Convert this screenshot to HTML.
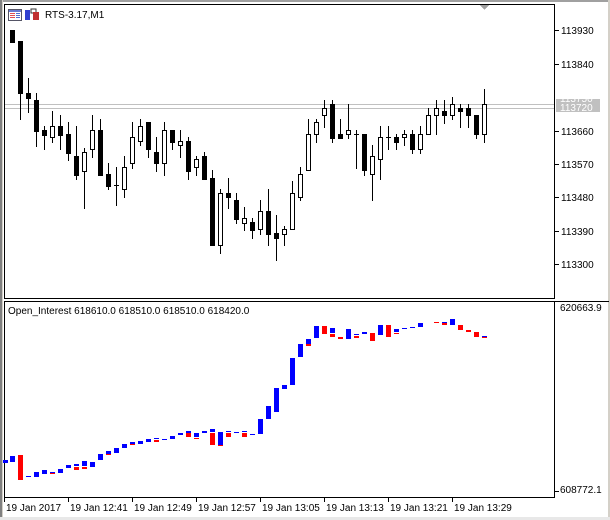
<!DOCTYPE html>
<html><head><meta charset="utf-8"><style>
html,body{margin:0;padding:0;background:#fff;}
body{width:610px;height:520px;overflow:hidden;position:relative;}
svg{position:absolute;left:0;top:0;}
text{font-family:"Liberation Sans",sans-serif;font-size:10px;fill:#000;}
</style></head><body>
<svg id="s" width="610" height="520" xmlns="http://www.w3.org/2000/svg" shape-rendering="crispEdges">
<rect x="0" y="0" width="610" height="520" fill="#fff"/>
<rect x="0" y="0" width="610" height="2" fill="#a0a0a0"/>
<rect x="0" y="0" width="2" height="520" fill="#808080"/>
<rect x="2" y="0" width="1" height="520" fill="#d4d0c8"/>
<rect x="608" y="0" width="2" height="520" fill="#d4d0c8"/>
<rect x="0" y="517" width="610" height="3" fill="#e8e8e8"/>
<!-- main panel -->
<rect x="4.5" y="4.5" width="550" height="294" fill="none" stroke="#000"/>
<!-- indicator panel -->
<line x1="4" y1="301.5" x2="609" y2="301.5" stroke="#000"/>
<line x1="4.5" y1="301" x2="4.5" y2="497" stroke="#000"/>
<line x1="554.5" y1="301" x2="554.5" y2="497" stroke="#000"/>
<line x1="4" y1="497.5" x2="555" y2="497.5" stroke="#000"/>
<!-- shift marker -->
<polygon points="480,5 489,5 484.5,10" fill="#a0a0a0"/>
<!-- grey price lines -->
<line x1="5" y1="104.5" x2="554" y2="104.5" stroke="#c0c0c0"/>
<line x1="5" y1="108.5" x2="554" y2="108.5" stroke="#c0c0c0"/>
<!-- title icons -->
<rect x="8.5" y="9.5" width="13" height="11" fill="#fff" stroke="#556"/>
<rect x="9" y="10" width="12" height="2" fill="#6a7bd0"/>
<rect x="10" y="13" width="5" height="1" fill="#e05050"/><rect x="10" y="15" width="5" height="1" fill="#e05050"/><rect x="10" y="17" width="5" height="1" fill="#e05050"/>
<rect x="16" y="13" width="4" height="1" fill="#5070d0"/><rect x="16" y="15" width="4" height="1" fill="#5070d0"/><rect x="16" y="17" width="4" height="1" fill="#5070d0"/>
<rect x="25" y="10" width="5" height="10" fill="#3040d0"/>
<rect x="31" y="9" width="5" height="4" fill="none" stroke="#333"/>
<rect x="33" y="12" width="6" height="8" fill="#c03030"/>
<text x="45" y="18">RTS-3.17,M1</text>
<text x="8" y="314">Open_Interest 618610.0 618510.0 618510.0 618420.0</text>
<g id="c"></g>
<!-- price axis -->
<g id="ax"></g>
<rect x="556" y="99" width="44" height="13" fill="#c0c0c0"/>
<text x="560" y="102" fill="#fff" style="fill:#fff">113750</text>
<rect x="556" y="103" width="44" height="9" fill="#c0c0c0"/>
<text x="560" y="111" style="fill:#fff">113720</text>
<text x="560" y="311">620663.9</text>
<line x1="555" y1="491.5" x2="559" y2="491.5" stroke="#000"/>
<text x="560" y="493">608772.1</text>
</svg>
<script>
var g=document.getElementById('c'),h='';
var C=[[12,30,42,30,42,0],[20,41,119,41,93,0],[28,78,112,93,98,0],[36,93,146,100,131,0],[44,126,149,130,135,0],[52,111,142,126,137,1],[60,115,149,126,135,0],[68,122,160,134,153,0],[76,126,179,156,175,0],[84,148,208,152,171,1],[92,115,157,130,149,1],[100,119,175,130,175,0],[108,163,189,174,186,0],[116,167,205,185,185,2],[124,156,197,167,189,1],[132,122,168,137,163,1],[140,119,145,126,141,1],[148,122,157,122,149,0],[156,137,171,152,163,0],[164,122,175,130,163,1],[172,130,149,130,142,0],[180,130,157,141,145,1],[188,137,179,141,171,0],[196,156,175,159,167,1],[204,152,179,156,179,0],[212,170,245,178,245,0],[220,189,253,193,245,1],[228,178,208,193,197,0],[236,193,223,200,219,0],[244,207,230,218,223,1],[252,218,238,222,230,0],[260,200,234,211,229,1],[268,189,245,211,234,0],[276,215,260,233,238,0],[284,226,245,229,234,1],[292,181,229,193,229,1],[300,167,200,174,197,1],[308,119,170,134,170,1],[316,119,142,122,134,1],[324,100,127,108,115,1],[332,100,142,104,138,0],[340,119,138,134,138,0],[348,104,138,130,134,1],[356,130,168,134,134,2],[364,134,175,134,170,0],[372,145,200,156,174,1],[380,126,179,137,159,1],[388,126,149,137,137,2],[396,134,149,137,142,0],[404,130,145,134,137,1],[412,130,153,134,149,0],[420,126,153,134,149,1],[428,108,134,115,134,1],[436,100,134,108,115,1],[444,100,123,111,115,0],[452,97,119,104,115,1],[460,104,127,108,111,0],[468,104,127,108,115,0],[476,115,138,115,134,0],[484,89,142,104,134,1]];
C.forEach(function(c){var x=c[0];
h+='<line x1="'+(x+.5)+'" y1="'+c[1]+'" x2="'+(x+.5)+'" y2="'+(c[2]+1)+'" stroke="#000"/>';
if(c[5]==0)h+='<rect x="'+(x-2)+'" y="'+c[3]+'" width="5" height="'+(c[4]-c[3]+1)+'" fill="#000"/>';
else if(c[5]==1)h+='<rect x="'+(x-1.5)+'" y="'+(c[3]+.5)+'" width="4" height="'+(c[4]-c[3])+'" fill="#fff" stroke="#000"/>';
else h+='<line x1="'+(x-2)+'" y1="'+(c[3]+.5)+'" x2="'+(x+3)+'" y2="'+(c[3]+.5)+'" stroke="#000"/>';});
var B='#0000ff',R='#ff0000';
var O=[[5,460,463,B],[12,456,462,B],[20,455,480,R],[28,476,477,B],[36,472,477,B],[44,470,474,B],[52,472,473,B],[52,473,474,R],[60,469,473,B],[68,465,468,B],[76,464,466,B],[76,467,470,R],[84,461,466,B],[84,467,469,R],[92,462,467,B],[100,454,460,B],[108,451,454,B],[108,454,455,R],[116,448,453,B],[124,444,448,B],[132,442,444,B],[132,444,445,R],[140,441,444,B],[148,439,442,B],[156,438,439,B],[156,440,442,R],[164,439,440,B],[172,436,439,B],[180,433,435,B],[188,431,433,B],[188,433,437,R],[196,433,437,B],[196,438,439,R],[204,431,433,B],[212,429,432,B],[212,433,445,R],[220,432,445,B],[220,445,446,R],[228,431,432,B],[228,433,437,R],[236,432,433,B],[244,431,432,B],[244,433,437,R],[252,434,435,B],[260,419,434,B],[268,406,419,B],[276,388,412,B],[284,385,389,B],[292,358,385,B],[300,344,357,B],[308,339,344,B],[308,344,346,R],[316,326,338,B],[324,326,334,R],[332,328,333,B],[332,334,337,R],[340,337,339,R],[348,329,339,B],[356,334,335,B],[356,336,338,R],[364,332,334,B],[372,333,341,R],[380,325,335,B],[388,325,337,R],[396,329,332,B],[396,333,334,R],[404,328,329,B],[412,327,328,B],[420,323,327,B],[436,322,323,R],[444,322,323,B],[444,323,325,R],[452,319,325,B],[460,325,330,R],[468,330,332,R],[476,332,337,R],[484,336,337,B],[484,337,338,R]];
O.forEach(function(o){h+='<rect x="'+(o[0]-2)+'" y="'+o[1]+'" width="5" height="'+Math.max(1,o[2]-o[1])+'" fill="'+o[3]+'"/>';});
g.innerHTML=h;
var a='',P=[[113930,30],[113840,64],[113660,131],[113570,164],[113480,197],[113390,231],[113300,264]];
P.forEach(function(p){a+='<line x1="555" y1="'+(p[1]+.5)+'" x2="559" y2="'+(p[1]+.5)+'" stroke="#000"/><text x="561" y="'+(p[1]+4)+'">'+p[0]+'</text>';});
var T=[[4,'19 Jan 2017'],[68,'19 Jan 12:41'],[132,'19 Jan 12:49'],[196,'19 Jan 12:57'],[260,'19 Jan 13:05'],[324,'19 Jan 13:13'],[388,'19 Jan 13:21'],[452,'19 Jan 13:29']];
T.forEach(function(t){a+='<line x1="'+(t[0]+.5)+'" y1="497" x2="'+(t[0]+.5)+'" y2="502" stroke="#000"/><text x="'+(t[0]+2)+'" y="511">'+t[1]+'</text>';});
document.getElementById('ax').innerHTML=a;
</script>
</body></html>
